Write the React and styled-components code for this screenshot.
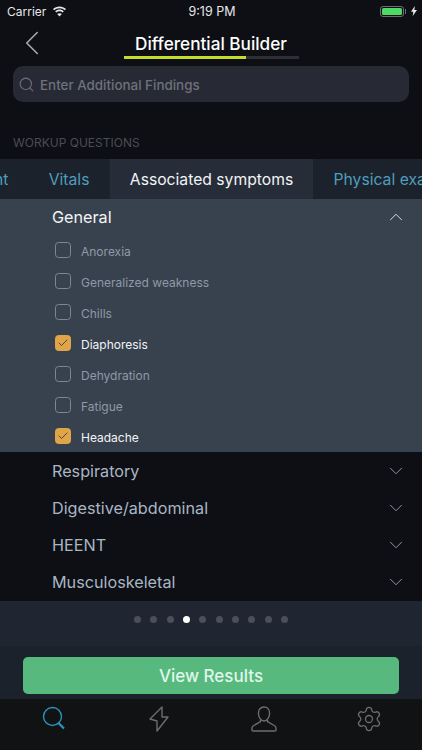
import React from 'react';
import styled, { createGlobalStyle } from 'styled-components';
import { Search, ChevronLeft, ChevronUp, ChevronDown, Check, Settings } from 'lucide-react';

const GlobalStyle = createGlobalStyle`
	html, body {
		margin: 0;
		padding: 0;
		background: #0e1015;
	}
	* {
		box-sizing: border-box;
	}
`;

const Screen = styled.div`
	width: 422px;
	height: 750px;
	overflow: hidden;
	display: flex;
	flex-direction: column;
	background: #0d0f14;
	font-family: Inter, 'Liberation Sans', sans-serif;
	color: #fff;
`;

const StatusBar = styled.div`
	height: 22px;
	padding: 0 5px 0 7px;
	display: grid;
	grid-template-columns: 1fr auto 1fr;
	align-items: center;
	font-size: 12.5px;
	color: #e6e7e9;
`;

const StatusLeft = styled.div`
	display: flex;
	align-items: center;
	gap: 6px;
	font-size: 12px;
`;

const StatusRight = styled.div`
	display: flex;
	align-items: center;
	justify-content: flex-end;
	gap: 7px;
`;

const Battery = styled.div`
	position: relative;
	width: 24px;
	height: 11px;
	padding: 1px;
	border: 1px solid #6b6f73;
	border-radius: 3px;
	&::before {
		content: '';
		display: block;
		height: 100%;
		border-radius: 1.5px;
		background: #4cd964;
	}
	&::after {
		content: '';
		position: absolute;
		right: -3px;
		top: 2px;
		width: 1px;
		height: 5px;
		background: #6b6f73;
	}
`;

const NavBar = styled.div`
	height: 44px;
	position: relative;
	display: flex;
	flex-direction: column;
	align-items: center;
	padding-top: 11px;
`;

const BackButton = styled.div`
	position: absolute;
	left: 11px;
	top: 0;
	color: #a9abb0;
	display: flex;
`;

const Title = styled.div`
	font-size: 17.2px;
	font-weight: 500;
	line-height: 21px;
`;

const Progress = styled.div`
	width: 175px;
	height: 2.5px;
	margin-top: 2px;
	background: #2c3036;
`;

const ProgressFill = styled.div`
	height: 100%;
	background: #c4dc2c;
`;

const SearchBox = styled.div`
	margin: 0 13px;
	height: 36px;
	padding: 1px 5px 0;
	display: flex;
	align-items: center;
	gap: 5px;
	border-radius: 10px;
	background: #272a35;
	font-size: 13.4px;
	font-weight: 500;
	color: #6e717a;
`;

const SectionLabel = styled.div`
	margin-top: 33px;
	padding-left: 13px;
	height: 24px;
	font-size: 12px;
	line-height: 15px;
	color: #4a4d55;
`;

const Tabs = styled.div`
	height: 40px;
	display: flex;
	background: #1c222b;
	overflow: hidden;
`;

const Tab = styled.div`
	flex: none;
	display: flex;
	align-items: center;
	padding: 0 20.2px;
	margin-left: ${props => props.$offset || 0}px;
	font-size: 15.7px;
	white-space: nowrap;
	color: ${props => (props.$active ? '#f2f4f6' : '#4f9dbd')};
	background: ${props => (props.$active ? '#262d38' : 'transparent')};
`;

const Panel = styled.div`
	height: 253px;
	background: #38424e;
`;

const GroupHeader = styled.div`
	height: ${props => props.$height}px;
	padding: 0 15px 0 52px;
	display: flex;
	align-items: center;
	justify-content: space-between;
	font-size: 16.2px;
	color: ${props => (props.$open ? '#f2f4f6' : '#a9b6c4')};
	svg {
		color: ${props => (props.$open ? '#e5e8ea' : '#98a2ac')};
	}
`;

const OptionList = styled.div`
	display: flex;
	flex-direction: column;
`;

const Option = styled.div`
	height: 31px;
	padding: 2px 0 0 55px;
	display: flex;
	align-items: center;
	gap: 10px;
	font-size: 12px;
	color: ${props => (props.$checked ? '#f2f4f6' : '#8e99a8')};
`;

const Box = styled.div`
	width: 16px;
	height: 16px;
	margin-top: -4px;
	display: flex;
	align-items: center;
	justify-content: center;
	border-radius: 3.5px;
	border: 1px solid ${props => (props.$checked ? '#dfa548' : '#7c8694')};
	background: ${props => (props.$checked ? '#dfa548' : 'transparent')};
	color: #33302a;
`;

const Groups = styled.div`
	height: 149px;
	display: flex;
	flex-direction: column;
`;

const DotsStrip = styled.div`
	height: 45px;
	padding-bottom: 8px;
	display: flex;
	align-items: center;
	justify-content: center;
	gap: 9.3px;
	background: #1f2531;
`;

const Dot = styled.div`
	width: 7px;
	height: 7px;
	border-radius: 50%;
	background: ${props => (props.$active ? '#fff' : '#4a4f5b')};
`;

const Footer = styled.div`
	height: 53px;
	padding: 11px 23px 5px;
	background: #1c222c;
`;

const ResultsButton = styled.div`
	height: 37px;
	display: flex;
	align-items: center;
	justify-content: center;
	border-radius: 5px;
	background: #57b97d;
	font-size: 17px;
	font-weight: 500;
	color: #dff7ea;
`;

const TabBar = styled.div`
	flex: 1;
	display: grid;
	grid-template-columns: repeat(4, 1fr);
	padding: 0 1px;
	background: #111214;
`;

const TabIcon = styled.div`
	padding-top: 7px;
	display: flex;
	justify-content: center;
	color: ${props => (props.$active ? '#2a94bd' : '#6c6d70')};
`;

const Gear = styled(Settings)`
	margin-top: -1px;
`;

const options = [
	{ label: 'Anorexia' },
	{ label: 'Generalized weakness' },
	{ label: 'Chills' },
	{ label: 'Diaphoresis', checked: true },
	{ label: 'Dehydration' },
	{ label: 'Fatigue' },
	{ label: 'Headache', checked: true },
];

const groups = ['Respiratory', 'Digestive/abdominal', 'HEENT', 'Musculoskeletal'];

const Wifi = () => (
	<svg width="15" height="11" viewBox="0 0 15 11" fill="#e6e7e9">
		<path d="M7.5 2.2c2.1 0 4 .8 5.4 2.1l1.1-1.2C12.3 1.400 10 .4 7.500.4S2.700 1.400 1 3.100l1.100 1.200C3.500 3 5.400 2.200 7.500 2.200z" />
		<path d="M7.500 5.300c1.200 0 2.300.5 3.200 1.200l1.100-1.200c-1.100-1-2.700-1.700-4.300-1.700s-3.200.7-4.300 1.700l1.100 1.200c.9-.7 2-1.200 3.200-1.200z" />
		<path d="M7.500 10.600l2.300-2.500c-.6-.5-1.400-.9-2.300-.9s-1.700.4-2.300.9z" />
	</svg>
);

const ChargeBolt = () => (
	<svg width="6" height="10" viewBox="0 0 6 10" fill="#e6e7e9">
		<path d="M3.800 0L0 5.700h2.300L1.700 10 6 3.900H3.400z" />
	</svg>
);

const MagnifierTab = () => (
	<svg width="24" height="26" viewBox="0 0 24 26" fill="none" stroke="currentColor">
		<circle cx="10.500" cy="10.500" r="9" strokeWidth="1.400" />
		<path d="M16 16.500l6 6" strokeWidth="2.200" />
	</svg>
);

const LightningTab = () => (
	<svg width="20" height="26" viewBox="0 0 20 26" fill="none" stroke="currentColor" strokeWidth="1.400" strokeLinejoin="round">
		<path d="M13 1L1 13l7 2v10l11-14h-6z" />
	</svg>
);

const PersonTab = () => (
	<svg width="26" height="26" viewBox="0 0 26 26" fill="none" stroke="currentColor" strokeWidth="1.400">
		<path d="M13 1c3.400 0 5.600 2.600 5.600 6.200S16.400 15 13 15 7.400 10.800 7.400 7.200 9.600 1 13 1z" />
		<path d="M9.500 13.800v1.700L2 20c-1 .7-1 1.500-1 2.500V24c0 .5.300 1 1 1h22c.7 0 1-.5 1-1v-1.500c0-1 0-1.800-1-2.500l-7.500-4.500v-1.700" />
	</svg>
);

export default function App() {
	return (
		<Screen>
			<GlobalStyle />
			<StatusBar>
				<StatusLeft>
					Carrier
					<Wifi />
				</StatusLeft>
				<span>9:19 PM</span>
				<StatusRight>
					<Battery />
					<ChargeBolt />
				</StatusRight>
			</StatusBar>
			<NavBar>
				<BackButton>
					<ChevronLeft size={42} strokeWidth={0.9} />
				</BackButton>
				<Title>Differential Builder</Title>
				<Progress>
					<ProgressFill style={{ width: '70%' }} />
				</Progress>
			</NavBar>
			<SearchBox>
				<Search size={17} strokeWidth={1.5} />
				Enter Additional Findings
			</SearchBox>
			<SectionLabel>WORKUP QUESTIONS</SectionLabel>
			<Tabs>
				<Tab $offset={-68.5}>Present</Tab>
				<Tab>Vitals</Tab>
				<Tab $active>Associated symptoms</Tab>
				<Tab>Physical exam</Tab>
			</Tabs>
			<Panel>
				<GroupHeader $open $height={36}>
					General
					<ChevronUp size={22} strokeWidth={1} />
				</GroupHeader>
				<OptionList>
					{options.map(option => (
						<Option key={option.label} $checked={option.checked}>
							<Box $checked={option.checked}>
								{option.checked && <Check size={12} strokeWidth={1.6} />}
							</Box>
							{option.label}
						</Option>
					))}
				</OptionList>
			</Panel>
			<Groups>
				{groups.map(group => (
					<GroupHeader key={group} $height={37}>
						{group}
						<ChevronDown size={22} strokeWidth={1} />
					</GroupHeader>
				))}
			</Groups>
			<DotsStrip>
				{Array.from({ length: 10 }, (_, i) => (
					<Dot key={i} $active={i === 3} />
				))}
			</DotsStrip>
			<Footer>
				<ResultsButton>View Results</ResultsButton>
			</Footer>
			<TabBar>
				<TabIcon $active>
					<MagnifierTab />
				</TabIcon>
				<TabIcon>
					<LightningTab />
				</TabIcon>
				<TabIcon>
					<PersonTab />
				</TabIcon>
				<TabIcon>
					<Gear size={28} strokeWidth={1.1} />
				</TabIcon>
			</TabBar>
		</Screen>
	);
}
